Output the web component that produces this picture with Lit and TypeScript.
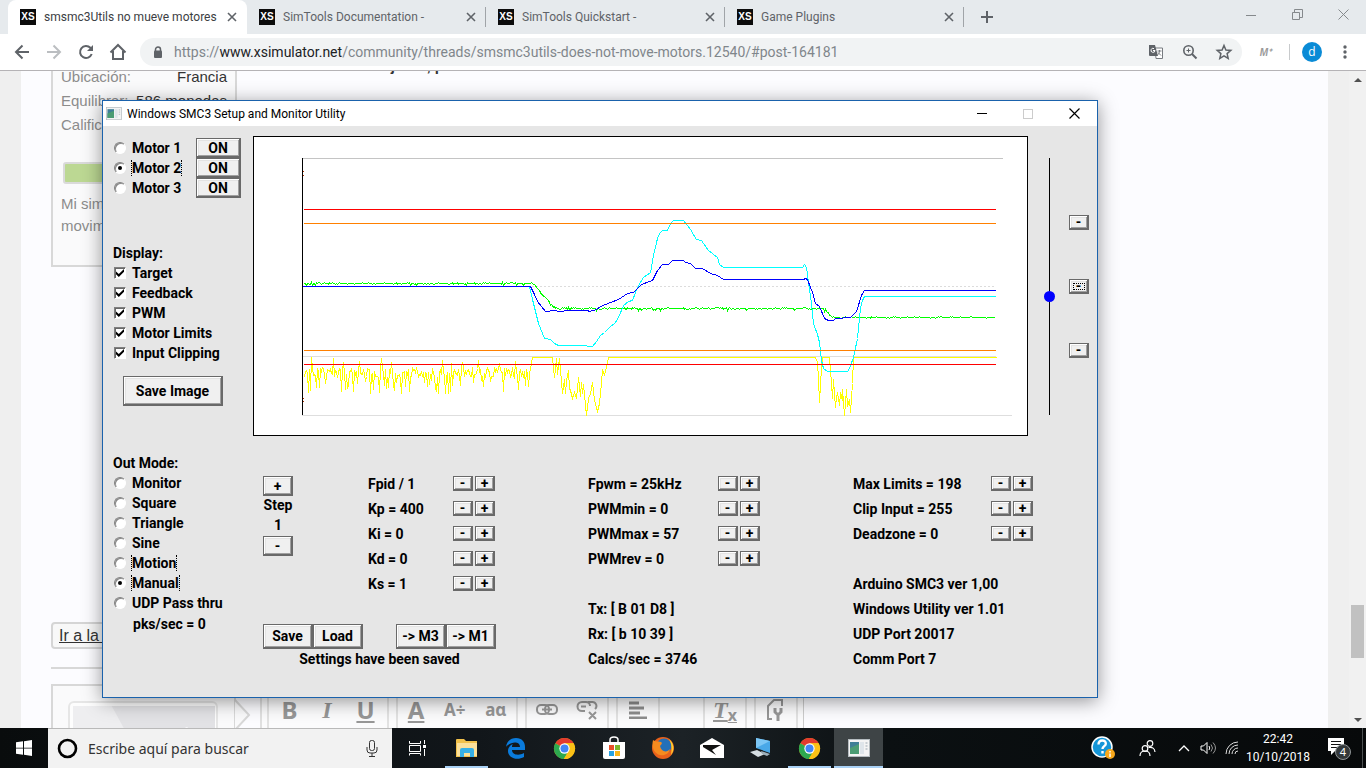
import { LitElement, html, svg, css, nothing } from "lit";
import { customElement } from "lit/decorators.js";
import { classMap } from "lit/directives/class-map.js";

/* Small repeatable generator for the noisy traces */
function noise(seed: number) {
  let s = seed;
  return () => {
    s = (s * 1103515245 + 12345) % 2147483648;
    return s / 2147483648;
  };
}

function feedbackTrace(): string {
  const rnd = noise(7);
  const level = (x: number) => {
    if (x < 532) return 283;
    if (x < 535) return 283 + (x - 532);
    if (x < 553) return 286 + ((x - 535) * 20) / 18;
    if (x < 563) return 306 + (x - 553) / 4;
    if (x < 823) return 308;
    if (x < 832) return 308 + (x - 823);
    return 317;
  };
  const pts: string[] = [];
  for (let x = 303; x <= 995; x++) {
    const r = rnd();
    const d = r < 0.12 ? -1 : r > 0.97 ? 2 : r > 0.82 ? 1 : 0;
    pts.push(`${x},${Math.round(level(x) + d)}`);
  }
  return pts.join(" ");
}

function pwmTrace(): string {
  const rnd = noise(41);
  const pts: string[] = [];
  for (let x = 303; x < 530; x++) {
    const r = rnd();
    const spread = rnd();
    let y = 367 + spread * 10;
    if (r < 0.06) y = 357 + spread * 6;
    else if (r > 0.76) y = 379 + spread * 15;
    pts.push(`${x},${Math.round(y)}`);
  }
  pts.push(
    "530,368 532,357 552,357 554,377 556,358 557,374 559,358 562,393 564,379 565,393 566,380 568,370 569,388 570,390 572,398 574,392 576,398 578,377 580,396 581,382 582,393 583,384 586,415 588,398 590,393 592,382 594,400 597,411 599,403 600,393 602,370 604,374 606,367 608,357 815,357 817,362 818,378 819,402 821,367 822,357 829,357 831,383 832,398 833,379 835,407 836,397 837,392 839,405 840,392 842,400 842,389 844,415 846,389 847,406 849,399 850,412 852,383 853,357 996,357"
  );
  return pts.join(" ");
}

const FEEDBACK = feedbackTrace();
const PWM = pwmTrace();
const CLIPPED =
  "529,286 533,303 538,323 544,338 550,339 554,343 558,345 585,345 588,346 592,346 596,341 600,335 604,332 609,327 615,322 618,317 623,305 628,301 632,300 635,292 638,285 643,277 650,272 653,255 657,238 659,233 662,230 667,230 670,223 673,220 683,220 690,229 696,239 701,240 708,250 717,257 719,264 723,267 802,267 804,264 806,267 808,282 811,303 813,323 817,334 819,342 821,360 823,368 827,371 847,371 849,368 853,357 857,338 860,307 862,300 864,296 995,296";
const TARGET =
  "302,286 530,286 534,294 537,301 541,306 545,311 555,310 558,311 570,310 587,310 589,311 596,309 600,306 610,302 618,299 627,293 633,292 641,284 652,280 657,270 662,264 668,264 672,260 683,260 685,262 690,263 695,268 702,268 710,273 717,275 723,279 803,279 805,278 807,279 812,292 815,303 819,306 824,318 828,320 833,320 835,318 850,317 856,311 861,295 864,290 995,290";

const chromeLogo = svg`<svg viewBox="0 0 24 24" width="23" height="23"><circle cx="12" cy="12" r="11" fill="#fbc116"/><path d="M12 12 2.5 6.4A11 11 0 0 1 21.6 6.6H12z" fill="#e33b2e"/><path d="M12 12 2.4 6.6A11 11 0 0 0 11.3 23l5-8.6z" fill="#2da94f"/><path d="M12 6.6h9.6A11 11 0 0 1 11.3 23l5.3-8.4z" fill="#fbc116"/><circle cx="12" cy="12" r="5.4" fill="#fff"/><circle cx="12" cy="12" r="4.2" fill="#4286f5"/></svg>`;

const appLogo = (w: number) => svg`<svg viewBox="0 0 22 18" width=${w}><rect x=".5" y=".5" width="21" height="17" fill="#f4f4f4" stroke="#b5bcc0"/><rect x="2" y="3" width="9" height="12" fill="#3f7f96"/><path d="M2 15V9l9-4v10z" fill="#4b9c73"/><rect x="12" y="3" width="4" height="12" fill="#dfe5ea"/><path d="M17.500 4h2M17.500 7h2M17.500 10h2" stroke="#9aa7b0"/></svg>`;

@customElement("browser-chrome")
class BrowserChrome extends LitElement {
  static styles = css`
    :host { display: block; font-family: "Open Sans", "Noto Sans", sans-serif; color: #5f6368; }
    button { border: 0; padding: 0; background: none; color: inherit; font: inherit; display: grid; place-items: center; }
    .tabs { display: flex; height: 34px; background: #e6eaed; padding-left: 8px; align-items: stretch; }
    .tab { display: flex; align-items: center; width: 239px; box-sizing: border-box; padding: 0 8px 0 12px; gap: 8px; font-size: 12px; position: relative; }
    .tab.active { background: #fff; border-radius: 8px 8px 0 0; color: #3c4043; }
    .tab.split::after { content: ""; position: absolute; right: 0; top: 7px; height: 20px; width: 1px; background: #a0a4a8; }
    .fav { width: 16px; height: 16px; background: #0c0c0c; color: #fff; font: bold 10px/16px "Liberation Sans", sans-serif; text-align: center; flex: none; }
    .name { flex: 1; white-space: nowrap; font-family: Roboto, sans-serif; line-height: 18px; }
    .close { width: 14px; height: 14px; }
    .plus { width: 46px; }
    .caption { margin-left: auto; display: flex; align-items: flex-start; color: #85898c; }
    .caption button { width: 46px; height: 29px; }
    .bar { display: flex; height: 36px; align-items: center; background: #fff; border-bottom: 1px solid #b5b3b6; padding-left: 6px; }
    .nav { width: 32px; height: 32px; }
    .omni { flex: 1; height: 28px; border-radius: 14px; background: #f1f3f4; display: flex; align-items: center; margin-left: 6px; padding: 0 9px 0 13px; gap: 11px; }
    .url { flex: 1; min-width: 0; font: 14px/20px Roboto, sans-serif; color: #80868b; white-space: nowrap; overflow: hidden; }
    .host { color: #202124; }
    .acts { display: flex; gap: 16px; }
    .ext { width: 47px; font: italic 700 10px "Liberation Sans", sans-serif; color: #9a9a9a; }
    .rule { width: 1px; height: 16px; background: #c8cacc; }
    .avatar { width: 20px; height: 20px; border-radius: 50%; background: #0a8bd6; color: #fff; font-size: 12px; line-height: 18px; margin: 0 12px; }
    .menu { width: 21px; margin-right: 11px; }
  `;
  render() {
    const tabs = ["smsmc3Utils no mueve motores", "SimTools Documentation -", "SimTools Quickstart -", "Game Plugins"];
    return html`
      <div class="tabs">
        ${tabs.map((t, i) => html`<div class=${classMap({ tab: true, active: i === 0, split: i > 0 })}>
          <span class="fav">XS</span><span class="name">${t}</span>
          <button class="close" aria-label="Cerrar"><svg width="10" height="10" viewBox="0 0 10 10"><path d="M1 1l8 8M9 1 1 9" stroke="#5f6368" stroke-width="1.600"/></svg></button>
        </div>`)}
        <button class="plus" aria-label="Nueva"><svg width="12" height="12"><path d="M6 0v12M0 6h12" stroke="#5f6368" stroke-width="2"/></svg></button>
        <div class="caption">
          <button aria-label="Minimizar"><svg width="10" height="10"><path d="M0 5.500h10" stroke="currentColor"/></svg></button>
          <button aria-label="Restaurar"><svg width="11" height="11" fill="none" stroke="currentColor"><path d="M.5 3.500h7v7h-7zM2.500 3V.5h8v8H8"/></svg></button>
          <button aria-label="Cerrar"><svg width="11" height="11"><path d="M.5.5l10 10M10.500.5l-10 10" stroke="currentColor"/></svg></button>
        </div>
      </div>
      <div class="bar">
        <button class="nav" aria-label="Atrás"><svg width="16" height="16" fill="none" stroke="#5f6368" stroke-width="2"><path d="M15 8H2M8.500 1.500 2 8l6.500 6.500"/></svg></button>
        <button class="nav" aria-label="Adelante"><svg width="16" height="16" fill="none" stroke="#bbbec1" stroke-width="2"><path d="M1 8h13M7.500 1.500 14 8l-6.500 6.500"/></svg></button>
        <button class="nav" aria-label="Recargar"><svg width="16" height="16" fill="none" stroke="#5f6368" stroke-width="2"><path d="M13.700 10A6 6 0 1 1 12.400 3.800L14 5.500"/><path d="M15 1v6H9z" fill="#5f6368" stroke="none"/></svg></button>
        <button class="nav" aria-label="Inicio"><svg width="18" height="18" fill="none" stroke="#5f6368" stroke-width="2"><path d="M1.500 9.500 9 2l7.500 7.500M4 8v8h10V8"/></svg></button>
        <div class="omni">
          <svg width="10" height="13"><path d="M2.500 5V3.500a2.500 2.500 0 0 1 5 0V5" fill="none" stroke="#5f6368" stroke-width="1.500"/><rect x="1" y="4.500" width="8" height="7.500" rx="1" fill="#5f6368"/></svg>
          <div class="url">https://<span class="host">www.xsimulator.net</span>/community/threads/smsmc3utils-does-not-move-motors.12540/#post-164181</div>
          <div class="acts">
            <button aria-label="Traducir"><svg width="18" height="18" viewBox="0 0 18 18"><path d="M8 5h7.500v10.500H9z" fill="#fff" stroke="#777b80"/><path d="M2 2h6l3 11H3a1 1 0 0 1-1-1z" fill="#5f6368"/><path d="M8 7.500A2 2 0 1 1 7 5.600M6 7.500h2" fill="none" stroke="#fff"/><path d="M10.500 8h4M12.500 7v1c0 2-1 3-2 4M11 9.500l3 3" fill="none" stroke="#777b80"/></svg></button>
            <button aria-label="Zoom"><svg width="18" height="18" fill="none" stroke="#5f6368"><circle cx="7.500" cy="7.500" r="4.700" stroke-width="1.600"/><path d="M11 11l4.500 4.500" stroke-width="2"/><path d="M5.500 7.500h4M7.500 5.500v4"/></svg></button>
            <button aria-label="Marcador"><svg width="18" height="18" viewBox="0 0 18 18"><path d="M9 2.500l1.900 4.500 4.900.4-3.700 3.200 1.100 4.800L9 12.900l-4.200 2.500 1.100-4.800-3.700-3.200 4.900-.4z" fill="none" stroke="#5f6368" stroke-width="1.500"/></svg></button>
          </div>
        </div>
        <button class="ext">M⁺</button>
        <span class="rule"></span>
        <button class="avatar">d</button>
        <button class="menu" aria-label="Menú"><svg width="4" height="14" fill="#5f6368"><circle cx="2" cy="2" r="1.700"/><circle cx="2" cy="7" r="1.700"/><circle cx="2" cy="12" r="1.700"/></svg></button>
      </div>`;
  }
}

@customElement("forum-page")
class ForumPage extends LitElement {
  static styles = css`
    :host { display: flex; min-height: 0; overflow: hidden; background: #efefef; font: 15px/24px "Liberation Sans", Arial, sans-serif; color: #8c8c8c; }
    .sheet { flex: 1; margin: 0 21px; background: #fcfcff; padding: 0 30px; display: flex; flex-direction: column; overflow: hidden; }
    .post { display: flex; flex: none; height: 551px; }
    .card { width: 186px; height: 196px; box-sizing: border-box; overflow: hidden; border: 2px solid #d8d8d8; border-top: 0; background: #fafafb; padding: 0 8px; }
    .facts { margin: -6px 0 0; }
    .fact { display: flex; justify-content: space-between; white-space: nowrap; }
    .fact dt, .fact dd { margin: 0; }
    .fact dd { color: #333; }
    .meter { height: 22px; margin: 25px 2px 9px; box-sizing: border-box; border: 2px solid #dadada; border-radius: 3px; background: #bcd893; }
    .bio { margin: 0; line-height: 22px; }
    .words { margin: -17px 0 0 117px; font-weight: 700; color: #333; }
    .goto { flex: none; width: 180px; height: 27px; box-sizing: border-box; border: 2px solid #d5d5d5; border-radius: 4px; background: #f8f8f8; color: #333; font-size: 16px; line-height: 23px; padding-left: 6px; }
    .line { flex: none; width: 75%; height: 2px; background: #d8d8d8; margin: 18px 0 15px; }
    .reply { flex: none; display: flex; }
    .who { width: 185px; height: 60px; box-sizing: border-box; border: 2px solid #d8d8d8; border-bottom: 0; background: #fafafb; padding: 15px; }
    .pic { display: block; width: 100%; }
    .tip { margin-left: -2px; }
    .editor { display: flex; margin-left: 8px; border-left: 2px solid #e0e0e0; border-right: 1px solid #ccc; background: #fbfbfc; padding: 0 5px; gap: 7px; height: 60px; }
    .group { display: flex; align-items: center; justify-content: space-around; border: 2px solid #e2e2e2; border-width: 0 2px; box-sizing: border-box; padding-bottom: 8px; }
    .g3 { width: 122px; } .g2 { width: 84px; } .g1 { width: 44px; } .gap { width: 29px; }
    .tool { border: 0; padding: 0; background: none; color: #979797; font: bold 24px/28px "Noto Sans", sans-serif; display: flex; align-items: center; }
    .i { font-family: "Liberation Serif", serif; font-style: italic; }
    .u { text-decoration: underline; }
    .small { font-size: 17px; }
    .sub { font: bold 16px/16px "Noto Sans", sans-serif; padding-top: 10px; }
    .scroll { width: 17px; background: #f1f1f1; display: flex; flex-direction: column; align-items: center; }
    .arrow { width: 17px; height: 17px; flex: none; }
    .track { flex: 1; display: flex; flex-direction: column; }
    .before { flex: 517; }
    .thumb { flex: 53; width: 13px; background: #c1c1c1; }
    .after { flex: 53; }
  `;
  render() {
    return html`
      <div class="sheet">
        <div class="post">
          <div class="card">
            <dl class="facts">
              <div class="fact"><dt>Ubicación:</dt><dd>Francia</dd></div>
              <div class="fact"><dt>Equilibrar:</dt><dd>586 monedas</dd></div>
              <div class="fact"><dt>Calificaciones:</dt></div>
            </dl>
            <div class="meter"></div>
            <p class="bio">Mi simulador de movimiento</p>
          </div>
          <p class="words">trabajador, p</p>
        </div>
        <a class="goto" href="#pagina">Ir a la página</a>
        <div class="line"></div>
        <div class="reply">
          <div class="who"><svg class="pic" viewBox="0 0 152 60"><rect x="1" y="1" width="149" height="80" rx="5" fill="#fdfdfd" stroke="#e6e6e6" stroke-width="2"/><path d="M5 5h143v55H5z" fill="#e2e2e5"/><path d="M44 5l30 55H5V5z" fill="#eeeef0"/><path d="M90 40l30-14 6 10z" fill="#f8f8fa"/></svg></div>
          <svg class="tip" width="18" height="60"><path d="M1 0v16l14 15L1 46v14" fill="#fafafb" stroke="#d8d8d8" stroke-width="2"/></svg>
          <div class="editor">
            <div class="group g3"><button class="tool">B</button><button class="tool i">I</button><button class="tool u">U</button></div>
            <div class="group g3"><button class="tool u">A</button><button class="tool small">A÷</button><button class="tool small">aɑ</button></div>
            <div class="group g2">
              <button class="tool" aria-label="Enlace"><svg width="22" height="14" fill="none" stroke="#979797" stroke-width="2"><rect x="1" y="2" width="12" height="9" rx="4"/><rect x="9" y="2" width="12" height="9" rx="4"/><path d="M6 6.500h10"/></svg></button>
              <button class="tool" aria-label="Quitar"><svg width="22" height="20" fill="none" stroke="#979797" stroke-width="2"><path d="M9 11H6a4 4 0 0 1 0-9h4a4 4 0 0 1 4 4M5 6.500h5M12 2h4a4 4 0 0 1 3 7M13 12l7 7M20 12l-7 7"/></svg></button>
            </div>
            <div class="group g1"><button class="tool" aria-label="Alinear"><svg width="18" height="18" stroke="#8c8c8c" stroke-width="3"><path d="M0 2h10M0 7h15M0 12h11M0 17h18"/></svg></button></div>
            <span class="gap"></span>
            <div class="group g1"><button class="tool i u">T<span class="sub">x</span></button></div>
            <div class="group g1"><button class="tool" aria-label="Opciones"><svg width="20" height="24" fill="none" stroke="#979797" stroke-width="2"><path d="M6 21H2V8l6-6h8v6"/><path d="M9 10v4l3 3 3-3v-4M12 16v7" stroke-width="3"/></svg></button></div>
          </div>
        </div>
      </div>
      <div class="scroll">
        <svg class="arrow" viewBox="0 0 17 17"><path d="M5 11l4-4 4 4z" fill="#505050"/></svg>
        <div class="track"><div class="before"></div><div class="thumb"></div><div class="after"></div></div>
        <svg class="arrow" viewBox="0 0 17 17"><path d="M5 7l4 4 4-4z" fill="#505050"/></svg>
      </div>`;
  }
}

@customElement("smc-window")
class SmcWindow extends LitElement {
  static styles = css`
    :host { display: block; box-sizing: border-box; border: 1px solid #1a62ac; background: #e6e6e6; color: #000; box-shadow: 0 3px 18px rgba(0, 0, 0, 0.42); font: bold 14px/20px Roboto, "Liberation Sans", sans-serif; }
    .title { display: flex; align-items: center; height: 25px; background: #fff; padding-left: 3px; gap: 5px; font: 12px/18px Roboto, sans-serif; }
    .caption { margin-left: auto; display: flex; }
    .caption button { all: unset; width: 46px; height: 25px; display: grid; place-items: center; }
    .body { padding: 10px 0 26px 10px; }
    .top { display: flex; }
    .side { width: 140px; flex: none; padding-top: 2px; box-sizing: border-box; }
    .motor { display: flex; justify-content: space-between; padding-right: 12px; }
    .opt { display: flex; align-items: center; height: 20px; padding-left: 1px; gap: 5px; white-space: nowrap; }
    .opt span { border: 0 dotted #000; padding: 0 1px; line-height: 16px; }
    .opt .dotted { border-width: 0 1px; padding: 0; }
    .heading { display: block; }
    .display { margin-top: 45px; }
    .opt input { appearance: none; margin: 0; width: 12px; height: 12px; box-sizing: border-box; background: #fff; border: 1px solid; border-color: #808080 #fff #fff #808080; display: grid; place-items: center; flex: none; }
    .opt input[type="radio"] { border-radius: 50%; box-shadow: inset 1px 1px #888; }
    .opt input[type="radio"]:checked::before { content: ""; width: 4px; height: 4px; border-radius: 50%; background: #000; }
    .opt input[type="checkbox"] { box-shadow: inset 1px 1px #696969; }
    .opt input[type="checkbox"]:checked::before { content: ""; width: 8px; height: 8px; background: #000; clip-path: polygon(0 30%, 35% 62%, 100% 0, 100% 35%, 35% 100%, 0 65%); }
    .btn { appearance: none; margin: 0; padding: 0; box-sizing: border-box; border: solid #696969; border-width: 1px 2px 2px 1px; border-radius: 0; background: #f0f0f0; box-shadow: inset 1px 1px #fff, inset -1px -1px #a0a0a0, inset 2px 2px #e3e3e3; font: inherit; line-height: 12px; color: #000; display: grid; place-items: center; white-space: nowrap; }
    .on { width: 45px; height: 20px; }
    .image { width: 100px; height: 30px; margin: 13px 0 0 10px; }
    .tiny { width: 20px; height: 15px; }
    .step { width: 30px; height: 20px; }
    .wide { width: 50px; height: 25px; }
    .focus { border: 1px dotted #000; width: 10px; height: 5px; display: grid; place-items: center; line-height: 5px; }
    .chart { flex: 1; min-width: 0; display: block; background: #fff; }
    .manual { flex: none; display: flex; gap: 14px; padding: 0 8px 0 16px; }
    .range { appearance: none; writing-mode: vertical-lr; width: 11px; height: 257px; margin: 22px 0 0; background: linear-gradient(#000, #000) center / 1px 100% no-repeat; }
    .range::-webkit-slider-thumb { appearance: none; width: 11px; height: 11px; border-radius: 50%; background: #00f; }
    .presets { display: flex; flex-direction: column; gap: 49px; padding-top: 79px; }
    .bottom { display: grid; grid-template-columns: 150fr 325fr 265fr 244fr; padding-top: 17px; }
    .pks { padding-left: 20px; line-height: 22px; }
    .col { padding-top: 18px; }
    .mid { width: 233px; }
    .pair { display: flex; justify-content: space-between; padding-right: 1px; }
    .stepper { width: 30px; padding-top: 5px; display: flex; flex-direction: column; text-align: center; }
    .stepper span { line-height: 18px; padding-bottom: 2px; }
    .pid { width: 127px; } .pwm { width: 172px; } .lim { width: 180px; }
    .row { display: flex; align-items: center; height: 25px; gap: 2px; white-space: nowrap; }
    .row span { flex: 1; }
    .files { display: flex; margin-top: 28px; }
    .copy { display: flex; margin-left: auto; }
    .status { text-align: center; }
    .space { height: 25px; }
  `;
  private row(label: string, controls = true) {
    return html`<div class="row"><span>${label}</span>${controls
      ? html`<button class="btn tiny" aria-label=${"Less " + label}>-</button><button class="btn tiny" aria-label=${"More " + label}>+</button>`
      : nothing}</div>`;
  }
  private chart() {
    return html`<svg class="chart" viewBox="253 136 775 300" role="img" aria-label="Motor chart" shape-rendering="crispEdges" fill="none">
      <rect x="253.500" y="136.500" width="774" height="299" fill="#fff" stroke="#000"/>
      <path d="M302 158.500H1003" stroke="#c4c4c4"/>
      <path d="M302 415.500H1012M302 356.500H996" stroke="#dedede"/>
      <path d="M304 286.500H996" stroke="#dcdcdc" stroke-dasharray="2 2"/>
      <polyline points=${PWM} transform="translate(.5 .5)" stroke="#ff0"/>
      <polyline points=${FEEDBACK} transform="translate(.5 .5)" stroke="#0f0"/>
      <polyline points=${CLIPPED} transform="translate(.5 .5)" stroke="#0ff"/>
      <polyline points=${TARGET} transform="translate(.5 .5)" stroke="#00f"/>
      <path d="M304 209.500H996M304 364.500H996" stroke="#f00"/>
      <path d="M304 223.500H996M304 350.500H996" stroke="#ff8000"/>
      <path d="M302.500 158V415" stroke="#000"/>
      <path d="M303 171.500h1M303 175.500h1M303 398.500h1M303 401.500h1" stroke="#b03000"/>
    </svg>`;
  }
  render() {
    const modes = ["Monitor", "Square", "Triangle", "Sine", "Motion", "Manual", "UDP Pass thru"];
    return html`
      <div class="title">${appLogo(16)}<span>Windows SMC3 Setup and Monitor Utility</span>
        <div class="caption">
          <button aria-label="Minimize"><svg width="10" height="10"><path d="M0 4.500h10" stroke="#000"/></svg></button>
          <button aria-label="Maximize"><svg width="10" height="10"><rect x=".5" y=".5" width="9" height="9" fill="none" stroke="#ccc"/></svg></button>
          <button aria-label="Close"><svg width="11" height="11"><path d="M.5.5l10 10M10.500.5l-10 10" stroke="#000" stroke-width="1.200"/></svg></button>
        </div>
      </div>
      <div class="body">
        <div class="top">
          <div class="side">
            ${[1, 2, 3].map((n) => html`<div class="motor">
              <label class="opt"><input type="radio" name="motor" ?checked=${n === 2} /><span class=${n === 2 ? "dotted" : ""}>Motor ${n}</span></label>
              <button class="btn on">ON</button></div>`)}
            <div class="display"><span class="heading">Display:</span>
              ${["Target", "Feedback", "PWM", "Motor Limits", "Input Clipping"].map((t) => html`<label class="opt"><input type="checkbox" checked /><span>${t}</span></label>`)}
            </div>
            <button class="btn image">Save Image</button>
          </div>
          ${this.chart()}
          <div class="manual">
            <input class="range" type="range" min="0" max="100" value="54" aria-label="Manual position" />
            <div class="presets">
              <button class="btn tiny">-</button>
              <button class="btn tiny"><span class="focus">-</span></button>
              <button class="btn tiny">-</button>
            </div>
          </div>
        </div>
        <div class="bottom">
          <div><span class="heading">Out Mode:</span>
            ${modes.map((m) => html`<label class="opt"><input type="radio" name="mode" ?checked=${m === "Manual"} /><span class=${m === "Motion" || m === "Manual" ? "dotted" : ""}>${m}</span></label>`)}
            <div class="pks">pks/sec = 0</div>
          </div>
          <div class="col mid">
            <div class="pair">
              <div class="stepper"><button class="btn step">+</button><span>Step</span><span>1</span><button class="btn step">-</button></div>
              <div class="pid">${["Fpid / 1", "Kp = 400", "Ki = 0", "Kd = 0", "Ks = 1"].map((t) => this.row(t))}</div>
            </div>
            <div class="files"><button class="btn wide">Save</button><button class="btn wide">Load</button>
              <div class="copy"><button class="btn wide">-&gt; M3</button><button class="btn wide">-&gt; M1</button></div></div>
            <div class="status">Settings have been saved</div>
          </div>
          <div class="col pwm">
            ${["Fpwm = 25kHz", "PWMmin = 0", "PWMmax = 57", "PWMrev = 0"].map((t) => this.row(t))}
            <div class="space"></div>
            ${["Tx: [ B 01 D8 ]", "Rx: [ b 10 39 ]", "Calcs/sec = 3746"].map((t) => this.row(t, false))}
          </div>
          <div class="col lim">
            ${["Max Limits = 198", "Clip Input = 255", "Deadzone = 0"].map((t) => this.row(t))}
            <div class="space"></div>
            ${["Arduino SMC3 ver 1,00", "Windows Utility ver 1.01", "UDP Port 20017", "Comm Port 7"].map((t) => this.row(t, false))}
          </div>
        </div>
      </div>`;
  }
}

@customElement("task-bar")
class TaskBar extends LitElement {
  static styles = css`
    :host { display: flex; height: 40px; background: linear-gradient(90deg, #090c0d, #11161a 35%, #1c2226 50%, #0b1012 65%, #07090a); color: #fff; font: 12px/18px "Noto Sans", sans-serif; }
    button { border: 0; padding: 0; background: none; color: inherit; font: inherit; display: grid; place-items: center; }
    .start { width: 48px; }
    .search { width: 344px; box-sizing: border-box; background: #f2f2f2; border-top: 1px solid #b9b9b9; display: flex; align-items: center; gap: 10px; padding: 0 14px 0 9px; }
    .search input { flex: 1; min-width: 0; border: 0; padding: 0; background: none; outline: 0; font: 14px/20px "Noto Sans", sans-serif; color: #333; }
    .search input::placeholder { color: #333; }
    .apps { display: flex; padding-left: 1px; }
    .app { width: 49px; border-bottom: 2px solid transparent; box-sizing: border-box; padding-top: 2px; }
    .open { border-image: linear-gradient(90deg, transparent 10%, #a9d1f5 10%, #a9d1f5 90%, transparent 90%) 2; }
    .current { background: #3e4446; border-bottom-color: #a9d1f5; }
    .tray { margin-left: auto; display: flex; align-items: center; }
    .slot { height: 40px; }
    .help { width: 38px; } .people { width: 50px; } .s { width: 24px; }
    .clock { width: 68px; line-height: 18px; text-align: center; font-family: Roboto, sans-serif; }
    .note { width: 50px; padding-left: 4px; }
    .edge { width: 3px; height: 40px; border-left: 1px solid #4b4f50; }
  `;
  render() {
    const icons = [
      svg`<svg width="18" height="16" fill="none" stroke="#fff"><path d="M.5 1v2.500h11V1M.5 5.500h11v6H.5zM.5 15.500V13.500h11v2M15.500 0v4M15.500 9v7"/><path d="M14 5h3v3h-3z" fill="#fff" stroke="none"/></svg>`,
      svg`<svg width="22" height="20"><path d="M0 2q0-1 1-1h7l2 2h11v16H0z" fill="#f2c14b"/><path d="M1 5h20v13H1z" fill="#fce09a"/><path d="M4 19v-7q0-2 2-2h10q2 0 2 2v7h-4v-4H8v4z" fill="#37b0e6"/></svg>`,
      svg`<svg width="22" height="22" viewBox="0 0 22 22"><path d="M1 10C2 3 7 1 11 1c6 0 9 4 9 9v3H7c0 5 7 6 12 3v4c-7 4-16 1-16-6 0-3 2-6 5-7-1 1-1 2-1 3h8c0-7-11-5-14 0z" fill="#0a7bdc"/></svg>`,
      chromeLogo,
      svg`<svg width="24" height="24"><path d="M8 7V4q0-3 4-3t4 3v3" fill="none" stroke="#fff" stroke-width="1.500"/><path d="M1 6h22v15q0 2-2 2H3q-2 0-2-2z" fill="#fff"/><path d="M7 9h5v5H7z" fill="#e8502a"/><path d="M13 9h5v5h-5z" fill="#7db82c"/><path d="M7 15h5v5H7z" fill="#27a1e0"/><path d="M13 15h5v5h-5z" fill="#f7b51b"/></svg>`,
      svg`<svg width="24" height="24"><circle cx="12" cy="12" r="11" fill="#e9611a"/><circle cx="13" cy="10" r="7.500" fill="#2370b8"/><path d="M2 4c2 2 5 1 8 2 2 1 0 3-1 4 1 6 7 7 10 3-1 5-6 7-10 6C4 18 0 12 2 4z" fill="#f58b1f"/><path d="M18 3c5 4 6 11 2 16 1-5 1-11-2-16z" fill="#fdd02f"/></svg>`,
      svg`<svg width="24" height="20"><path d="M0 7l12-7 12 7v13H0z" fill="#fff"/><path d="M3 7h18l-9 5 4 5-13-8z" fill="#111"/></svg>`,
      svg`<svg width="24" height="22"><path d="M7 1l14 3v12L7 11z" fill="#49a8e8"/><path d="M7 1l14 3-14 7z" fill="#7cc6f5"/><path d="M1 15l7-2 8 4-7 3z" fill="#d5dde2"/><path d="M12 14l9 3-3 2-5-2z" fill="#9fb0ba"/></svg>`,
      chromeLogo,
      appLogo(22),
    ];
    return html`
      <button class="start" aria-label="Inicio"><svg width="16" height="16" fill="#fff"><path d="M0 2.300 7 1.300v6.400H0zM8 1.200 16 0v7.700H8zM0 8.500h7v6.300l-7-1zM8 8.500h8V16l-8-1.200z"/></svg></button>
      <label class="search"><svg width="21" height="21"><circle cx="10.500" cy="10.500" r="8.500" fill="none" stroke="#000" stroke-width="2.600"/></svg>
        <input type="text" placeholder="Escribe aquí para buscar" aria-label="Buscar" />
        <svg width="12" height="17" fill="none" stroke="#333"><rect x="3.500" y=".5" width="5" height="10" rx="2"/><path d="M1 7v3q0 3 3 3h4q3 0 3-3V7M6 13v3M3 16.500h6"/></svg></label>
      <div class="apps">${icons.map((ic, i) => html`<button class=${classMap({ app: true, open: i === 1 || i === 8, current: i === 9 })} aria-label="App">${ic}</button>`)}</div>
      <div class="tray">
        <button class="slot help" aria-label="Ayuda"><svg width="24" height="24"><circle cx="11" cy="11" r="10" fill="#1596d8" stroke="#fff" stroke-width="1.500"/><path d="M7.500 8.500q0-4 3.700-4t3.600 3.300c0 2.400-3.300 2.400-3.300 5.200M11.500 15v2.500" fill="none" stroke="#fff" stroke-width="2.400"/><circle cx="19" cy="18" r="5" fill="#f7a71b"/><path d="M19 15v1.500M19 17.500v3.500" stroke="#fff" stroke-width="1.500"/></svg></button>
        <button class="slot people" aria-label="Contactos"><svg width="17" height="17" fill="none" stroke="#fff" stroke-width="1.200"><circle cx="11" cy="3.500" r="2.800"/><circle cx="6" cy="8.500" r="2.800"/><path d="M1 16q0-5 5-5t5 5M9.500 7.500q6-1 6.500 4.500"/></svg></button>
        <button class="slot s" aria-label="Iconos ocultos"><svg width="12" height="8"><path d="M1 7l5-5 5 5" fill="none" stroke="#fff" stroke-width="1.300"/></svg></button>
        <button class="slot s" aria-label="Volumen"><svg width="17" height="14" fill="none" stroke="#fff"><path d="M1 5h2.500L7 1.500v11L3.500 9H1z"/><path d="M9 5q1.500 2 0 4"/><path d="M11 3.500q3 3.500 0 7M13 1.500q5 5.500 0 11" stroke="#999"/></svg></button>
        <button class="slot s" aria-label="Red"><svg width="14" height="14" fill="none" stroke="#ddd"><path d="M1 13A12 12 0 0 1 13 1M4 13a9 9 0 0 1 9-9M7 13a6 6 0 0 1 6-6M10 13a3 3 0 0 1 3-3"/></svg></button>
        <div class="clock">22:42<br />10/10/2018</div>
        <button class="slot note" aria-label="Notificaciones"><svg width="26" height="26"><path d="M2 3h16v13H9l-4 4v-4H2z" fill="#fff"/><path d="M5 6.500h10M5 9.500h10M5 12.500h6" stroke="#111"/><circle cx="17" cy="17" r="7.500" fill="#33383a" stroke="#8f9496"/><text x="17" y="21" text-anchor="middle" font-size="11" fill="#fff">4</text></svg></button>
        <span class="edge"></span>
      </div>`;
  }
}

@customElement("app-root")
class AppRoot extends LitElement {
  static styles = css`
    :host { display: flex; flex-direction: column; height: 100vh; position: relative; overflow: hidden; }
    .page { flex: 1; }
    .floating { position: absolute; left: 102px; top: 100px; right: 268px; }
  `;
  render() {
    return html`<browser-chrome></browser-chrome><forum-page class="page"></forum-page><task-bar></task-bar><smc-window class="floating"></smc-window>`;
  }
}
